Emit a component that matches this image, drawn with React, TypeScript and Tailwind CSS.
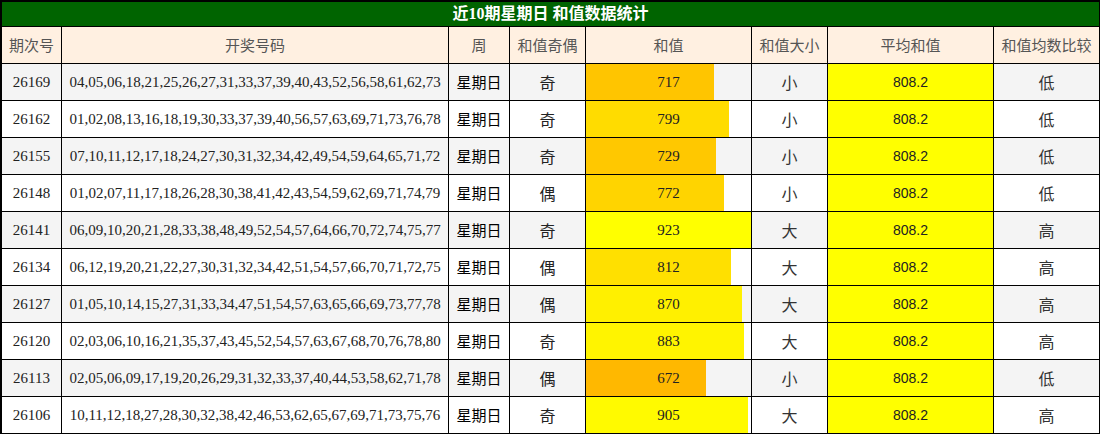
const rows = [
  { issue: '26169', nums: '04,05,06,18,21,25,26,27,31,33,37,39,40,43,52,56,58,61,62,73', odd: '奇', sum: 717, size: '小', cmp: '低' },
  { issue: '26162', nums: '01,02,08,13,16,18,19,30,33,37,39,40,56,57,63,69,71,73,76,78', odd: '奇', sum: 799, size: '小', cmp: '低' },
  { issue: '26155', nums: '07,10,11,12,17,18,24,27,30,31,32,34,42,49,54,59,64,65,71,72', odd: '奇', sum: 729, size: '小', cmp: '低' },
  { issue: '26148', nums: '01,02,07,11,17,18,26,28,30,38,41,42,43,54,59,62,69,71,74,79', odd: '偶', sum: 772, size: '小', cmp: '低' },
  { issue: '26141', nums: '06,09,10,20,21,28,33,38,48,49,52,54,57,64,66,70,72,74,75,77', odd: '奇', sum: 923, size: '大', cmp: '高' },
  { issue: '26134', nums: '06,12,19,20,21,22,27,30,31,32,34,42,51,54,57,66,70,71,72,75', odd: '偶', sum: 812, size: '大', cmp: '高' },
  { issue: '26127', nums: '01,05,10,14,15,27,31,33,34,47,51,54,57,63,65,66,69,73,77,78', odd: '偶', sum: 870, size: '大', cmp: '高' },
  { issue: '26120', nums: '02,03,06,10,16,21,35,37,43,45,52,54,57,63,67,68,70,76,78,80', odd: '奇', sum: 883, size: '大', cmp: '高' },
  { issue: '26113', nums: '02,05,06,09,17,19,20,26,29,31,32,33,37,40,44,53,58,62,71,78', odd: '偶', sum: 672, size: '小', cmp: '低' },
  { issue: '26106', nums: '10,11,12,18,27,28,30,32,38,42,46,53,62,65,67,69,71,73,75,76', odd: '奇', sum: 905, size: '大', cmp: '高' },
]

const maxSum = Math.max(...rows.map((r) => r.sum))
const minSum = Math.min(...rows.map((r) => r.sum))

// 越大越黄，越小越橙
function barColor(v: number) {
  const g = Math.round(184 + ((v - minSum) / (maxSum - minSum)) * 71)
  return `rgb(255, ${g}, 0)`
}

const grid = 'grid grid-cols-[62px_387px_61px_76px_166px_76px_166px_106px]'
const cell = 'flex items-center justify-center border-r border-b border-black'
const serif = "font-['Liberation_Serif','Noto_Sans_CJK_SC',serif]"
const cjk = "font-['Noto_Sans_CJK_SC',sans-serif]"

const headers = ['期次号', '开奖号码', '周', '和值奇偶', '和值', '和值大小', '平均和值', '和值均数比较']

export default function App() {
  return (
    <div className="w-[1100px] bg-white">
      <div
        className={`h-[27px] flex items-center justify-center border-t-2 border-l-2 border-r border-b border-black bg-[#006400] text-white text-[16px] font-bold ${serif}`}
      >
        近10期星期日 和值数据统计
      </div>

      <div className={`${grid} h-[37px] bg-[#fff0e1] text-[15px] text-[#555] ${cjk}`}>
        {headers.map((h, i) => (
          <div key={h} className={`${cell} ${i === 0 ? 'border-l-2' : ''}`}>
            {h}
          </div>
        ))}
      </div>

      {rows.map((r, i) => (
        <div key={r.issue} className={`${grid} h-[37px] ${i % 2 === 0 ? 'bg-[#f4f4f4]' : 'bg-white'}`}>
          <div className={`${cell} border-l-2 text-[15px] text-[#222] ${serif}`}>{r.issue}</div>
          <div className={`${cell} text-[15px] text-[#222] ${serif}`}>{r.nums}</div>
          <div className={`${cell} text-[15px] text-black ${cjk}`}>星期日</div>
          <div className={`${cell} text-[16px] text-[#222] ${cjk}`}>{r.odd}</div>
          <div className={`${cell} relative justify-start`}>
            <div className="h-full" style={{ width: `${(r.sum / maxSum) * 100}%`, backgroundColor: barColor(r.sum) }} />
            <span className={`absolute inset-0 flex items-center justify-center text-[15px] text-[#222] ${serif}`}>
              {r.sum}
            </span>
          </div>
          <div className={`${cell} text-[16px] text-[#333] ${cjk}`}>{r.size}</div>
          <div className={`${cell} bg-[#ffff00] text-[14px] text-[#222] font-['Liberation_Sans',sans-serif]`}>808.2</div>
          <div className={`${cell} text-[16px] text-[#333] ${cjk}`}>{r.cmp}</div>
        </div>
      ))}
    </div>
  )
}
